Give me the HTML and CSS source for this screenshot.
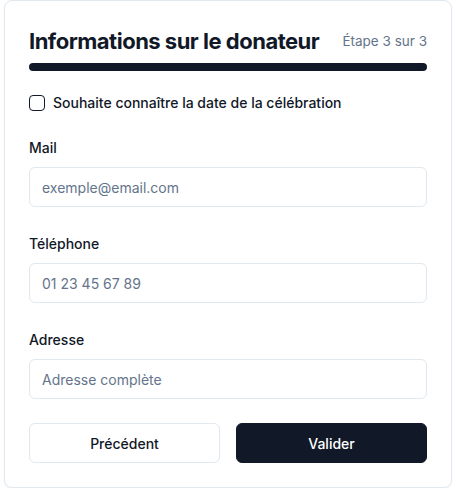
FILE: index.html
```html
<!DOCTYPE html>
<html lang="fr">
<head>
<meta charset="utf-8">
<link rel="stylesheet" href="styles.css">
</head>
<body>
<div class="card">
  <div class="header">
    <h1 class="title">Informations sur le donateur</h1>
    <span class="step">Étape 3 sur 3</span>
  </div>
  <div class="progress"><div class="progress-fill"></div></div>
  <label class="check-row">
    <input type="checkbox" class="check">
    <span>Souhaite connaître la date de la célébration</span>
  </label>
  <div class="fields">
    <div class="field">
      <label class="label">Mail</label>
      <input class="input" type="text" placeholder="exemple@email.com">
    </div>
    <div class="field">
      <label class="label">Téléphone</label>
      <input class="input" type="text" placeholder="01 23 45 67 89">
    </div>
    <div class="field">
      <label class="label">Adresse</label>
      <input class="input" type="text" placeholder="Adresse complète">
    </div>
  </div>
  <div class="actions">
    <button class="btn btn-outline">Précédent</button>
    <button class="btn btn-primary">Valider</button>
  </div>
</div>
</body>
</html>
```

FILE: styles.css
```css
* { box-sizing: border-box; }
html, body { margin: 0; padding: 0; background: #ffffff; }
body {
  padding: 0 3px 0 4px;
  font-family: Inter, "Liberation Sans", sans-serif;
  color: #0f172a;
}
.card {
  border: 1px solid #e2e8f0;
  border-radius: 8px;
  padding: 24px;
  background: #fff;
  box-shadow: 0 1px 2px rgba(0,0,0,0.05);
  height: 488px;
}
.header {
  display: flex;
  justify-content: space-between;
  align-items: center;
  height: 32px;
}
.title {
  margin: 0;
  font-size: 22px;
  line-height: 32px;
  font-weight: 700;
  letter-spacing: -0.5px;
  color: #111827;
}
.step {
  font-size: 13.5px;
  line-height: 20px;
  color: #64748b;
}
.progress {
  margin-top: 6px;
  height: 8px;
  border-radius: 4px;
  background: #e5e7eb;
  overflow: hidden;
}
.progress-fill {
  width: 100%;
  height: 100%;
  background: #111827;
}
.check-row {
  display: flex;
  align-items: center;
  gap: 8px;
  margin-top: 22px;
  font-size: 14px;
  line-height: 20px;
  font-weight: 500;
  color: #111827;
}
.check {
  appearance: none;
  -webkit-appearance: none;
  margin: 0;
  width: 16px;
  height: 16px;
  border: 1.5px solid #111827;
  border-radius: 4px;
  background: #fff;
}
.fields {
  margin-top: 25px;
  display: flex;
  flex-direction: column;
  gap: 27px;
}
.field {
  display: flex;
  flex-direction: column;
  gap: 9px;
}
.label {
  font-size: 14px;
  line-height: 20px;
  font-weight: 500;
  color: #111827;
}
.input {
  height: 40px;
  width: 100%;
  border: 1px solid #e2e8f0;
  border-radius: 6px;
  padding: 0 12px;
  font-family: Inter, "Liberation Sans", sans-serif;
  font-size: 14px;
  color: #0f172a;
  background: #fff;
  outline: none;
}
.input::placeholder { color: #64748b; }
.actions {
  margin-top: 24px;
  display: flex;
  gap: 16px;
}
.btn {
  flex: 1;
  height: 40px;
  border-radius: 6px;
  font-family: Inter, "Liberation Sans", sans-serif;
  font-size: 14px;
  font-weight: 500;
}
.btn-outline {
  background: #fff;
  border: 1px solid #e2e8f0;
  color: #111827;
}
.btn-primary {
  background: #111827;
  border: 1px solid #111827;
  color: #fff;
}
```
